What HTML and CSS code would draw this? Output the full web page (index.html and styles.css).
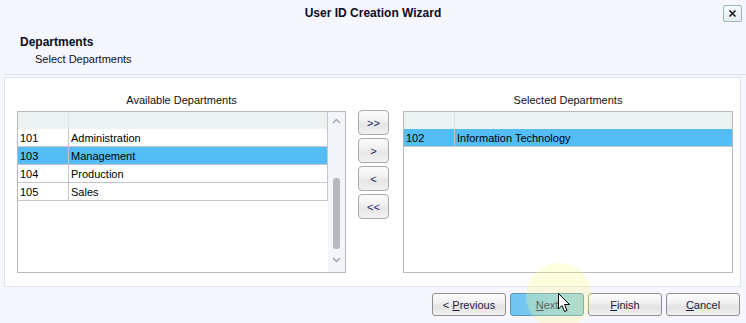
FILE: index.html
```html
<!DOCTYPE html>
<html lang="en">
<head>
<meta charset="utf-8">
<title>User ID Creation Wizard</title>
<link rel="stylesheet" href="styles.css">
</head>
<body>
<div class="dialog">
  <div class="titlebar">
    <span></span>
    <h1 class="title">User ID Creation Wizard</h1>
    <button class="close" aria-label="Close">
      <svg width="9" height="9" viewBox="0 0 9 9"><path d="M1.5 1.5 L7.5 7.5 M7.5 1.5 L1.5 7.5" stroke="#1a1a1a" stroke-width="1.6" fill="none"/></svg>
    </button>
  </div>

  <div class="header">
    <div class="h-title">Departments</div>
    <div class="h-sub">Select Departments</div>
  </div>

  <div class="tabline"></div>

  <div class="panel">
    <div class="list-group left">
      <div class="list-label">Available Departments</div>
      <div class="grid">
        <div class="grid-body">
          <div class="row head"><div class="c1"></div><div class="c2"></div></div>
          <div class="row"><div class="c1">101</div><div class="c2">Administration</div></div>
          <div class="row sel"><div class="c1">103</div><div class="c2">Management</div></div>
          <div class="row"><div class="c1">104</div><div class="c2">Production</div></div>
          <div class="row"><div class="c1">105</div><div class="c2">Sales</div></div>
        </div>
        <div class="vscroll">
          <svg class="chev" width="9" height="6" viewBox="0 0 9 6"><path d="M1 5 L4.5 1.5 L8 5" stroke="#9aa0a8" stroke-width="1.3" fill="none"/></svg>
          <div class="thumb"></div>
          <svg class="chev" width="9" height="6" viewBox="0 0 9 6"><path d="M1 1 L4.5 4.5 L8 1" stroke="#9aa0a8" stroke-width="1.3" fill="none"/></svg>
        </div>
      </div>
    </div>

    <div class="movers">
      <button class="mv">&gt;&gt;</button>
      <button class="mv">&gt;</button>
      <button class="mv">&lt;</button>
      <button class="mv">&lt;&lt;</button>
    </div>

    <div class="list-group right">
      <div class="list-label">Selected Departments</div>
      <div class="grid">
        <div class="grid-body">
          <div class="row head"><div class="c1"></div><div class="c2"></div></div>
          <div class="row sel"><div class="c1">102</div><div class="c2">Information Technology</div></div>
        </div>
      </div>
    </div>
  </div>

  <div class="footer">
    <button class="btn">&lt; <u>P</u>revious</button>
    <button class="btn hover"><u>N</u>ext</button>
    <button class="btn"><u>F</u>inish</button>
    <button class="btn"><u>C</u>ancel</button>
  </div>

  <div class="spotlight"></div>
  <svg class="cursor" width="13" height="20" viewBox="0 0 13 20">
    <path d="M0.5 0.5 L0.5 16 L4 12.5 L6.5 18.5 L9 17.5 L6.5 11.5 L11.5 11.5 Z" fill="#fff" stroke="#000" stroke-width="1" stroke-linejoin="miter"/>
  </svg>
</div>
</body>
</html>
```

FILE: styles.css
```css
* { box-sizing: border-box; }

html, body {
  margin: 0;
  padding: 0;
}

body {
  width: 746px;
  height: 323px;
  overflow: hidden;
  background: #f5f6fe;
  font-family: "Liberation Sans", Arial, sans-serif;
  font-size: 11px;
  color: #000;
}

.dialog {
  position: relative;
  width: 746px;
  height: 323px;
  background: #f5f6fe;
}

/* title bar */
.titlebar {
  display: grid;
  grid-template-columns: 1fr auto 1fr;
  align-items: center;
  height: 26px;
}

.title {
  margin: 0;
  font-size: 12px;
  font-weight: bold;
  line-height: 26px;
  color: #0c0c1c;
}

.close {
  justify-self: end;
  margin-right: 4px;
  width: 19px;
  height: 17px;
  padding: 0;
  display: flex;
  align-items: center;
  justify-content: center;
  border: 1px solid #9ab6c4;
  border-radius: 2px;
  background: linear-gradient(#f6f9fb, #e6edf2);
}

/* header */
.header {
  height: 48px;
  padding: 9px 0 0 20px;
}

.h-title {
  font-size: 12px;
  font-weight: bold;
  line-height: 15px;
  color: #0c0c1c;
}

.h-sub {
  padding-left: 15px;
  line-height: 18px;
  color: #111;
}

.tabline {
  height: 3px;
  margin-left: 4px;
  border-top: 1px solid #dee0ea;
}

/* panel */
.panel {
  display: flex;
  align-items: flex-start;
  gap: 12px;
  height: 210px;
  margin: 0 5px 0 4px;
  padding: 15px 7px 13px 12px;
  background: #fff;
  border: 1px solid #dce3ee;
}

.list-group {
  display: flex;
  flex-direction: column;
}

.list-group.left { width: 329px; }
.list-group.right { width: 330px; margin-left: 2px; }

.list-label {
  text-align: center;
  line-height: 14px;
  margin-bottom: 4px;
  color: #111;
}

.grid {
  display: flex;
  height: 162px;
  border: 1px solid #b9b9b9;
  background: #fff;
}

.grid-body {
  flex: 1;
  display: flex;
  flex-direction: column;
}

.row {
  display: flex;
  height: 18px;
  padding-top: 2px;
  border-bottom: 1px solid #c6c6c6;
  line-height: 15px;
}

.left .row { border-right: 1px solid #c6c6c6; }

.row.head {
  height: 17px;
  padding-top: 0;
  background: #edf2f2;
  border-bottom: none;
}

.row .c1 {
  width: 51px;
  margin-top: -2px;
  padding-top: 2px;
  padding-left: 2px;
  border-right: 1px solid #c6c6c6;
}

.row.head .c1 {
  margin-top: 0;
  border-right-color: #dfe5e5;
}

.row .c2 {
  flex: 1;
  padding-left: 2px;
}

.row.sel { background: #54bdf6; }

/* scrollbar */
.vscroll {
  width: 17px;
  display: flex;
  flex-direction: column;
  align-items: center;
  background: #f3f5fb;
  padding-top: 6px;
}

.vscroll .chev { display: block; }

.thumb {
  width: 7px;
  height: 71px;
  margin: 54px 0 8px;
  border-radius: 3px;
  background-color: #b6babe;
  background-image: radial-gradient(#a6aaae 0.6px, transparent 0.7px);
  background-size: 2px 2px;
}

/* move buttons */
.movers {
  display: flex;
  flex-direction: column;
  gap: 3px;
  margin-top: 17px;
  width: 31px;
}

.mv {
  height: 25px;
  padding: 0;
  font-family: inherit;
  font-size: 11px;
  color: #1c2760;
  border: 1px solid #a9a9a9;
  border-radius: 4px;
  background: linear-gradient(#fbfbfb 0%, #f3f3f3 35%, #e6e6e6 60%, #f2f2f2 100%);
}

/* footer */
.footer {
  display: flex;
  justify-content: flex-end;
  gap: 4px;
  padding: 6px 6px 0 0;
}

.btn {
  width: 74px;
  height: 23px;
  padding: 0;
  font-family: inherit;
  font-size: 11px;
  color: #1b1b3c;
  border: 1px solid #8e8e8e;
  border-radius: 3px;
  background: linear-gradient(#fdfdfd 0%, #f1f1f1 40%, #e4e4e4 60%, #f0f0f0 100%);
}

.btn u { text-decoration-thickness: 1px; text-underline-offset: 1px; }

.btn.hover {
  border-color: #5b94b4;
  background: linear-gradient(to right, #6cc5f2, #7fcbee 45%, #92d2e0);
}

/* overlays: recorder's cursor highlight and pointer */
.spotlight {
  position: absolute;
  left: 526px;
  top: 263px;
  width: 66px;
  height: 66px;
  border-radius: 50%;
  background: rgba(255, 250, 140, 0.28);
  pointer-events: none;
}

.cursor {
  position: absolute;
  left: 558px;
  top: 293px;
  pointer-events: none;
}
```
